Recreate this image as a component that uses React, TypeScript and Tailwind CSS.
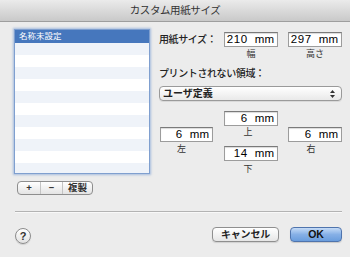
const font = { fontFamily: '"Liberation Sans", "Noto Sans CJK JP", sans-serif' };

function Field({ value, w = "w-[54px]" }: { value: string; w?: string }) {
  return (
    <div
      className={`${w} h-[15px] bg-white border border-[#9c9c9c] border-t-[#7a7a7a] shadow-[inset_0_1px_1px_rgba(0,0,0,0.15)] flex items-center justify-end pr-[3px] text-[11.5px] text-black leading-none`}
    >
      <span className="tracking-[0.6px]">{value}</span>
      <span className="ml-[7px]">mm</span>
    </div>
  );
}

function Caption({ text, h = "h-[12px]", pr = "" }: { text: string; h?: string; pr?: string }) {
  return (
    <div className={`${h} ${pr} flex items-center justify-center text-[9px] text-[#333] leading-none`}>
      {text}
    </div>
  );
}

export default function App() {
  const rows = Array.from({ length: 11 }, (_, i) => i);
  return (
    <div className="w-[350px] h-[257px] bg-[#ececec] flex flex-col overflow-hidden" style={font}>
      <div className="h-[22px] shrink-0 bg-gradient-to-b from-[#ebebeb] to-[#c9c9c9] border-b border-[#9e9e9e] flex items-center justify-center text-[10.5px] text-[#333] tracking-[-0.4px]">
        カスタム用紙サイズ
      </div>

      <div className="flex pl-[14px] pr-[8px] pt-[7px]">
        {/* left column */}
        <div className="w-[136px] shrink-0">
          <div className="h-[145px] border border-[#7f9fcf] shadow-[0_0_2px_1px_rgba(110,150,210,0.55)] bg-white overflow-hidden">
            <div className="h-[13px] bg-[#4677bd] text-white text-[8.5px] flex items-center pl-[4px] leading-none">
              名称未設定
            </div>
            {rows.map((i) => (
              <div key={i} className={`h-[12px] ${i % 2 === 0 ? "bg-[#eff3f9]" : "bg-white"}`} />
            ))}
          </div>
          <div className="mt-[7px] ml-[3px] w-[76px] h-[14px] flex rounded-[4px] border border-[#8e8e8e] bg-gradient-to-b from-white to-[#e4e4e4] text-[9.5px] text-[#333] font-bold leading-none overflow-hidden">
            <div className="w-[23px] flex items-center justify-center border-r border-[#c4c4c4]">+</div>
            <div className="w-[22px] flex items-center justify-center border-r border-[#c4c4c4]">−</div>
            <div className="flex-1 flex items-center justify-center">複製</div>
          </div>
        </div>

        {/* right column */}
        <div className="ml-[9px] flex-1 flex flex-col">
          <div className="mt-[3px] flex items-center">
            <div className="flex-1 text-[10px] font-medium text-[#222] tracking-[-0.4px] leading-none">用紙サイズ：</div>
            <Field value="210" />
            <div className="ml-[10px]">
              <Field value="297" />
            </div>
          </div>
          <div className="flex">
            <div className="flex-1" />
            <div className="w-[54px]">
              <Caption text="幅" h="h-[14px]" />
            </div>
            <div className="ml-[10px] w-[54px]">
              <Caption text="高さ" h="h-[14px]" />
            </div>
          </div>

          <div className="mt-[7px] h-[12px] flex items-center text-[10px] font-medium text-[#222] tracking-[-0.4px] leading-none">
            プリントされない領域：
          </div>

          <div className="mt-[6px] h-[15px] rounded-[4px] border border-[#9a9a9a] bg-gradient-to-b from-white to-[#e9e9e9] shadow-[0_1px_0_rgba(0,0,0,0.08)] flex items-center pl-[3px] pr-[6px] text-[10px] font-bold text-[#222] leading-none">
            <span className="flex-1">ユーザ定義</span>
            <svg width="5" height="8" viewBox="0 0 5 8">
              <path d="M2.5 0 L5 3 L0 3 Z" fill="#333" />
              <path d="M0 5 L5 5 L2.5 8 Z" fill="#333" />
            </svg>
          </div>

          <div className="mt-[10px] flex">
            <div className="ml-px w-[53px] mt-[16px]">
              <Field value="6" w="w-[53px]" />
              <Caption text="左" h="h-[14px]" pr="pr-[10px]" />
            </div>
            <div className="ml-[11px] w-[54px]">
              <Field value="6" />
              <Caption text="上" h="h-[13px]" pr="pr-[6px]" />
              <div className="mt-[7px]">
                <Field value="14" />
              </div>
              <Caption text="下" h="h-[16px]" pr="pr-[6px]" />
            </div>
            <div className="ml-[10px] w-[54px] mt-[16px]">
              <Field value="6" />
              <Caption text="右" h="h-[14px]" pr="pr-[8px]" />
            </div>
          </div>
        </div>
      </div>

      <div className="mt-[16px] ml-[15px] mr-[8px] h-px bg-[#b3b3b3] shadow-[0_1px_0_#f8f8f8]" />

      <div className="mt-[15px] flex items-start pr-[8px]">
        <div className="ml-[15px] mt-[1px] w-[16px] h-[16px] rounded-full border border-[#8c8c8c] bg-gradient-to-b from-white to-[#e2e2e2] shadow-[0_1px_1px_rgba(0,0,0,0.12)] flex items-center justify-center text-[11px] font-bold text-[#333] leading-none">
          ?
        </div>
        <div className="ml-auto w-[67px] h-[15px] rounded-[4px] border border-[#8f8f8f] bg-gradient-to-b from-white to-[#e6e6e6] shadow-[0_1px_1px_rgba(0,0,0,0.12)] flex items-center justify-center text-[10px] font-bold text-[#222] tracking-[-0.2px] leading-none">
          キャンセル
        </div>
        <div className="ml-[11px] w-[52px] h-[15px] rounded-[4px] border border-[#4f74ad] bg-gradient-to-b from-[#c5dbf6] via-[#86b0e6] to-[#6a9ddd] shadow-[0_1px_1px_rgba(0,0,0,0.15)] flex items-center justify-center text-[10.5px] font-bold text-[#111] leading-none">
          OK
        </div>
      </div>
    </div>
  );
}
